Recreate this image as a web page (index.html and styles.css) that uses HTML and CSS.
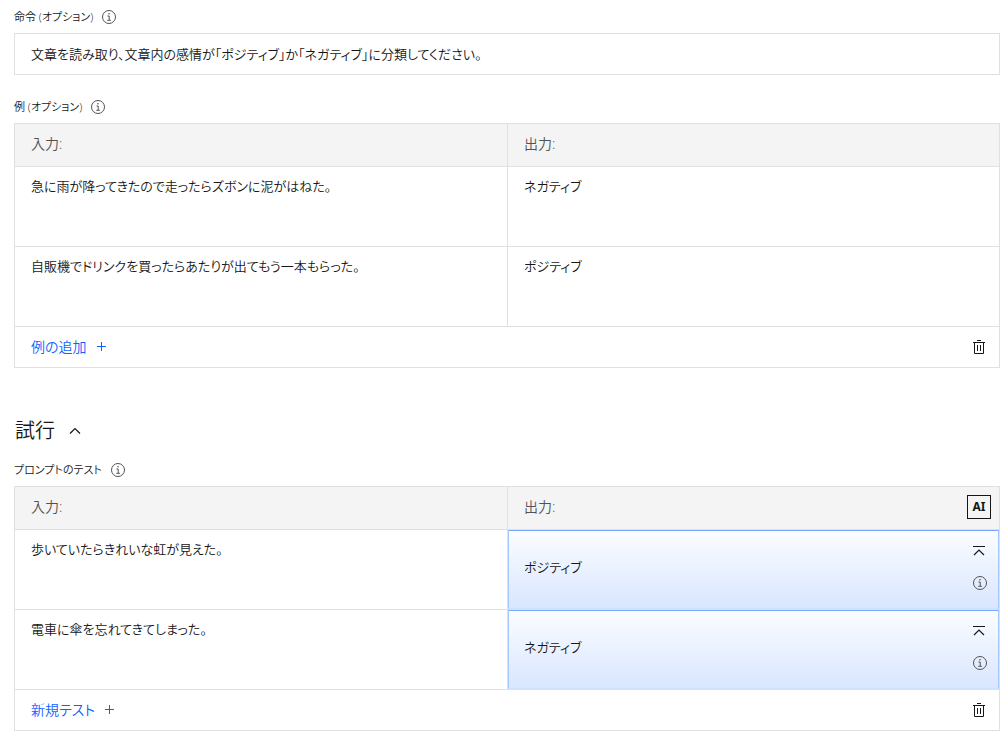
FILE: index.html
```html
<!DOCTYPE html>
<html lang="ja">
<head>
<meta charset="utf-8">
<meta name="viewport" content="width=device-width, initial-scale=1">
<title>プロンプト</title>
<link rel="stylesheet" href="styles.css">
</head>
<body>
<svg class="sprite" aria-hidden="true">
  <symbol id="info" viewBox="0 0 16 16">
    <circle cx="8" cy="8" r="6.5" fill="none" stroke="currentColor"/>
    <path d="M6.5 7H8.2v4M6.3 11.3h3.6" fill="none" stroke="currentColor"/>
    <circle cx="8" cy="4.7" r=".8" fill="currentColor"/>
  </symbol>
  <symbol id="trash" viewBox="0 0 16 16">
    <path d="M2 3.5h12M6 1.5h4M3.5 3.5v11h9v-11M6.5 6v6M9.5 6v6" fill="none" stroke="currentColor"/>
  </symbol>
  <symbol id="plus" viewBox="0 0 16 16">
    <path d="M4 7.5h9M8.5 3v9" fill="none" stroke="currentColor"/>
  </symbol>
  <symbol id="chevron" viewBox="0 0 16 16">
    <path d="M3 10.5l5-5 5 5" fill="none" stroke="currentColor" stroke-width="1.2"/>
  </symbol>
  <symbol id="totop" viewBox="0 0 16 16">
    <path d="M1 3.5h12" fill="none" stroke="currentColor"/>
    <path d="M2 12l5-5 5 5" fill="none" stroke="currentColor" stroke-width="1.2"/>
  </symbol>
</svg>
<main class="page">
  <section class="field">
    <div class="field-head">
      <label for="instruction">命令 (オプション)</label>
      <button class="icon-btn muted" aria-label="命令の情報"><svg class="icon"><use href="#info"/></svg></button>
    </div>
    <input class="text-box" id="instruction" type="text" value="文章を読み取り、文章内の感情が「ポジティブ」か「ネガティブ」に分類してください。">
  </section>

  <section class="field">
    <div class="field-head">
      <span id="examples-label">例 (オプション)</span>
      <button class="icon-btn muted" aria-label="例の情報"><svg class="icon"><use href="#info"/></svg></button>
    </div>
    <div class="panel">
      <table class="grid" aria-labelledby="examples-label">
        <thead>
          <tr><th scope="col">入力:</th><th scope="col">出力:</th></tr>
        </thead>
        <tbody>
          <tr>
            <td><textarea class="cell" aria-label="入力 1">急に雨が降ってきたので走ったらズボンに泥がはねた。</textarea></td>
            <td><textarea class="cell" aria-label="出力 1">ネガティブ</textarea></td>
          </tr>
          <tr>
            <td><textarea class="cell" aria-label="入力 2">自販機でドリンクを買ったらあたりが出てもう一本もらった。</textarea></td>
            <td><textarea class="cell" aria-label="出力 2">ポジティブ</textarea></td>
          </tr>
        </tbody>
      </table>
      <div class="panel-foot">
        <button class="add-btn">例の追加<svg class="icon"><use href="#plus"/></svg></button>
        <button class="icon-btn" aria-label="例の削除"><svg class="icon"><use href="#trash"/></svg></button>
      </div>
    </div>
  </section>

  <h2 class="heading">試行
    <button class="icon-btn" aria-label="折りたたむ"><svg class="icon"><use href="#chevron"/></svg></button>
  </h2>

  <section class="field">
    <div class="field-head">
      <span id="tests-label">プロンプトのテスト</span>
      <button class="icon-btn muted" aria-label="テストの情報"><svg class="icon"><use href="#info"/></svg></button>
    </div>
    <div class="panel">
      <table class="grid" aria-labelledby="tests-label">
        <thead>
          <tr>
            <th scope="col">入力:</th>
            <th scope="col"><div class="th-row">出力:<button class="ai-btn">AI</button></div></th>
          </tr>
        </thead>
        <tbody>
          <tr>
            <td><textarea class="cell" aria-label="テスト入力 1">歩いていたらきれいな虹が見えた。</textarea></td>
            <td>
              <div class="result">
                <span>ポジティブ</span>
                <div class="result-tools">
                  <button class="icon-btn" aria-label="例に移動"><svg class="icon"><use href="#totop"/></svg></button>
                  <button class="icon-btn muted" aria-label="出力の情報"><svg class="icon"><use href="#info"/></svg></button>
                </div>
              </div>
            </td>
          </tr>
          <tr>
            <td><textarea class="cell" aria-label="テスト入力 2">電車に傘を忘れてきてしまった。</textarea></td>
            <td>
              <div class="result">
                <span>ネガティブ</span>
                <div class="result-tools">
                  <button class="icon-btn" aria-label="例に移動"><svg class="icon"><use href="#totop"/></svg></button>
                  <button class="icon-btn muted" aria-label="出力の情報"><svg class="icon"><use href="#info"/></svg></button>
                </div>
              </div>
            </td>
          </tr>
        </tbody>
      </table>
      <div class="panel-foot">
        <button class="add-btn">新規テスト<svg class="icon"><use href="#plus"/></svg></button>
        <button class="icon-btn" aria-label="テストの削除"><svg class="icon"><use href="#trash"/></svg></button>
      </div>
    </div>
  </section>
</main>
</body>
</html>
```
FILE: styles.css
```css
* { box-sizing: border-box; }

body {
  margin: 0;
  background: #fff;
  color: #161616;
}

body, button, input, textarea {
  font-family: "Open Sans", "Noto Sans CJK JP", sans-serif;
  font-size: 13px;
  line-height: 20px;
  font-feature-settings: "palt";
}

body, button, input, textarea, th { font-weight: 350; }

button {
  margin: 0;
  padding: 0;
  border: 0;
  background: none;
  color: inherit;
  cursor: pointer;
}

.sprite { position: absolute; width: 0; height: 0; }

.page { padding: 1px 6px 6px 14px; }

.field + .field { margin-top: 16px; }

.field-head {
  display: flex;
  align-items: center;
  gap: 8px;
  height: 32px;
  font-size: 11px;
}

.icon { display: block; width: 16px; height: 16px; }

.icon-btn { display: block; flex: none; }

.text-box {
  display: block;
  width: 100%;
  height: 42px;
  padding: 0 16px 2px;
  border: 1px solid #e0e0e0;
  background: #fff;
  color: inherit;
}

.panel { border: 1px solid #e0e0e0; }

.grid {
  width: 100%;
  table-layout: fixed;
  border-collapse: separate;
  border-spacing: 0;
}

.grid th {
  height: 43px;
  padding: 0 16px 2px;
  border-bottom: 1px solid #e0e0e0;
  background: #f4f4f4;
  color: #525252;
  font-size: 14px;
  text-align: left;
}

.grid th:first-child { width: 50.1%; }

.grid td {
  height: 80px;
  padding: 0;
  border-bottom: 1px solid #e0e0e0;
  vertical-align: top;
}

.grid th:first-child, .grid td:first-child { border-right: 1px solid #e0e0e0; }

.cell {
  display: block;
  width: 100%;
  height: 79px;
  padding: 9px 16px;
  border: 0;
  background: none;
  color: inherit;
  resize: none;
}

.th-row {
  display: flex;
  align-items: center;
  justify-content: space-between;
  margin-right: -8px;
}

.ai-btn {
  width: 24px;
  height: 24px;
  border: 1px solid #161616;
  color: #161616;
  font-size: 12px;
  font-weight: 700;
  font-family: "Noto Sans", sans-serif;
}

.result {
  display: flex;
  align-items: center;
  justify-content: space-between;
  height: 79px;
  padding: 0 10px 6px 15px;
  border: 1px solid #d0e2ff;
  border-color: #78a9ff #a6c8ff #d0e2ff #a6c8ff;
  background: linear-gradient(#fbfdff, #d9e6ff);
}

.result-tools { display: grid; gap: 16px; }

.muted { color: #525252; }

.panel-foot {
  display: flex;
  align-items: center;
  justify-content: space-between;
  height: 40px;
  padding: 0 12px 0 16px;
}

.add-btn {
  display: flex;
  align-items: center;
  gap: 6px;
  color: #0f62fe;
  font-size: 14px;
}

.heading {
  display: flex;
  align-items: center;
  gap: 12px;
  height: 30px;
  margin: 48px 0 8px;
  padding-left: 1px;
  font-size: 20px;
  font-weight: 350;
  line-height: 28px;
}
```
